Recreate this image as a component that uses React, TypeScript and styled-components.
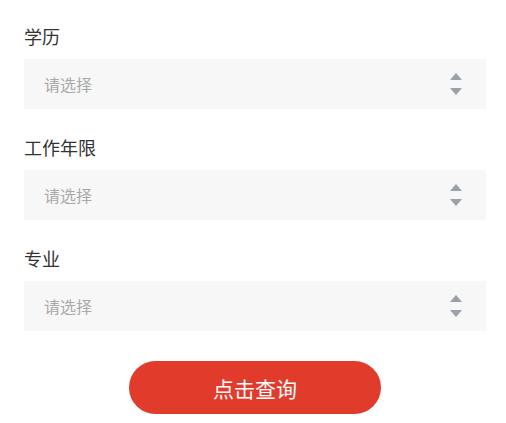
import React from 'react'
import styled, { createGlobalStyle } from 'styled-components'

const GlobalStyle = createGlobalStyle`
    body {
        margin: 0;
        background: #ffffff;
        font-family: "Noto Sans CJK SC", "Noto Sans", sans-serif;
    }
`;

const Form = styled.div`
    padding: 24px 20px 0 24px;
    display: flex;
    flex-direction: column;
`;

const Field = styled.div`
    display: flex;
    flex-direction: column;
    margin-bottom: 26px;
`;

const Label = styled.div`
    font-size: 18px;
    line-height: 24px;
    color: #333333;
    margin-bottom: 11px;
`;

const SelectBox = styled.div`
    height: 50px;
    background-color: #f7f7f7;
    display: flex;
    align-items: center;
    justify-content: space-between;
    padding: 0 24px 0 20px;
    cursor: pointer;
`;

const Placeholder = styled.span`
    font-size: 16px;
    color: #a9a9a9;
`;

const Arrows = styled.div`
    display: flex;
    flex-direction: column;
    gap: 8px;
`;

const Triangle = styled.span<{ down?: boolean }>`
    width: 0;
    height: 0;
    border-left: 6px solid transparent;
    border-right: 6px solid transparent;
    ${({ down }) => down
        ? 'border-top: 7px solid #9ba1a8;'
        : 'border-bottom: 7px solid #9ba1a8;'}
`;

const ButtonRow = styled.div`
    display: flex;
    justify-content: center;
    margin-top: 4px;
`;

const QueryButton = styled.button`
    width: 252px;
    height: 53px;
    border: none;
    border-radius: 27px;
    background-color: #e13c2b;
    color: #ffffff;
    font-family: inherit;
    font-size: 21px;
    cursor: pointer;
`;

const fields = ['学历', '工作年限', '专业']

const App = () => (
    <>
        <GlobalStyle />
        <Form>
            {fields.map((name) => (
                <Field key={name}>
                    <Label>{name}</Label>
                    <SelectBox>
                        <Placeholder>请选择</Placeholder>
                        <Arrows>
                            <Triangle />
                            <Triangle down />
                        </Arrows>
                    </SelectBox>
                </Field>
            ))}
            <ButtonRow>
                <QueryButton>点击查询</QueryButton>
            </ButtonRow>
        </Form>
    </>
)

export default App
